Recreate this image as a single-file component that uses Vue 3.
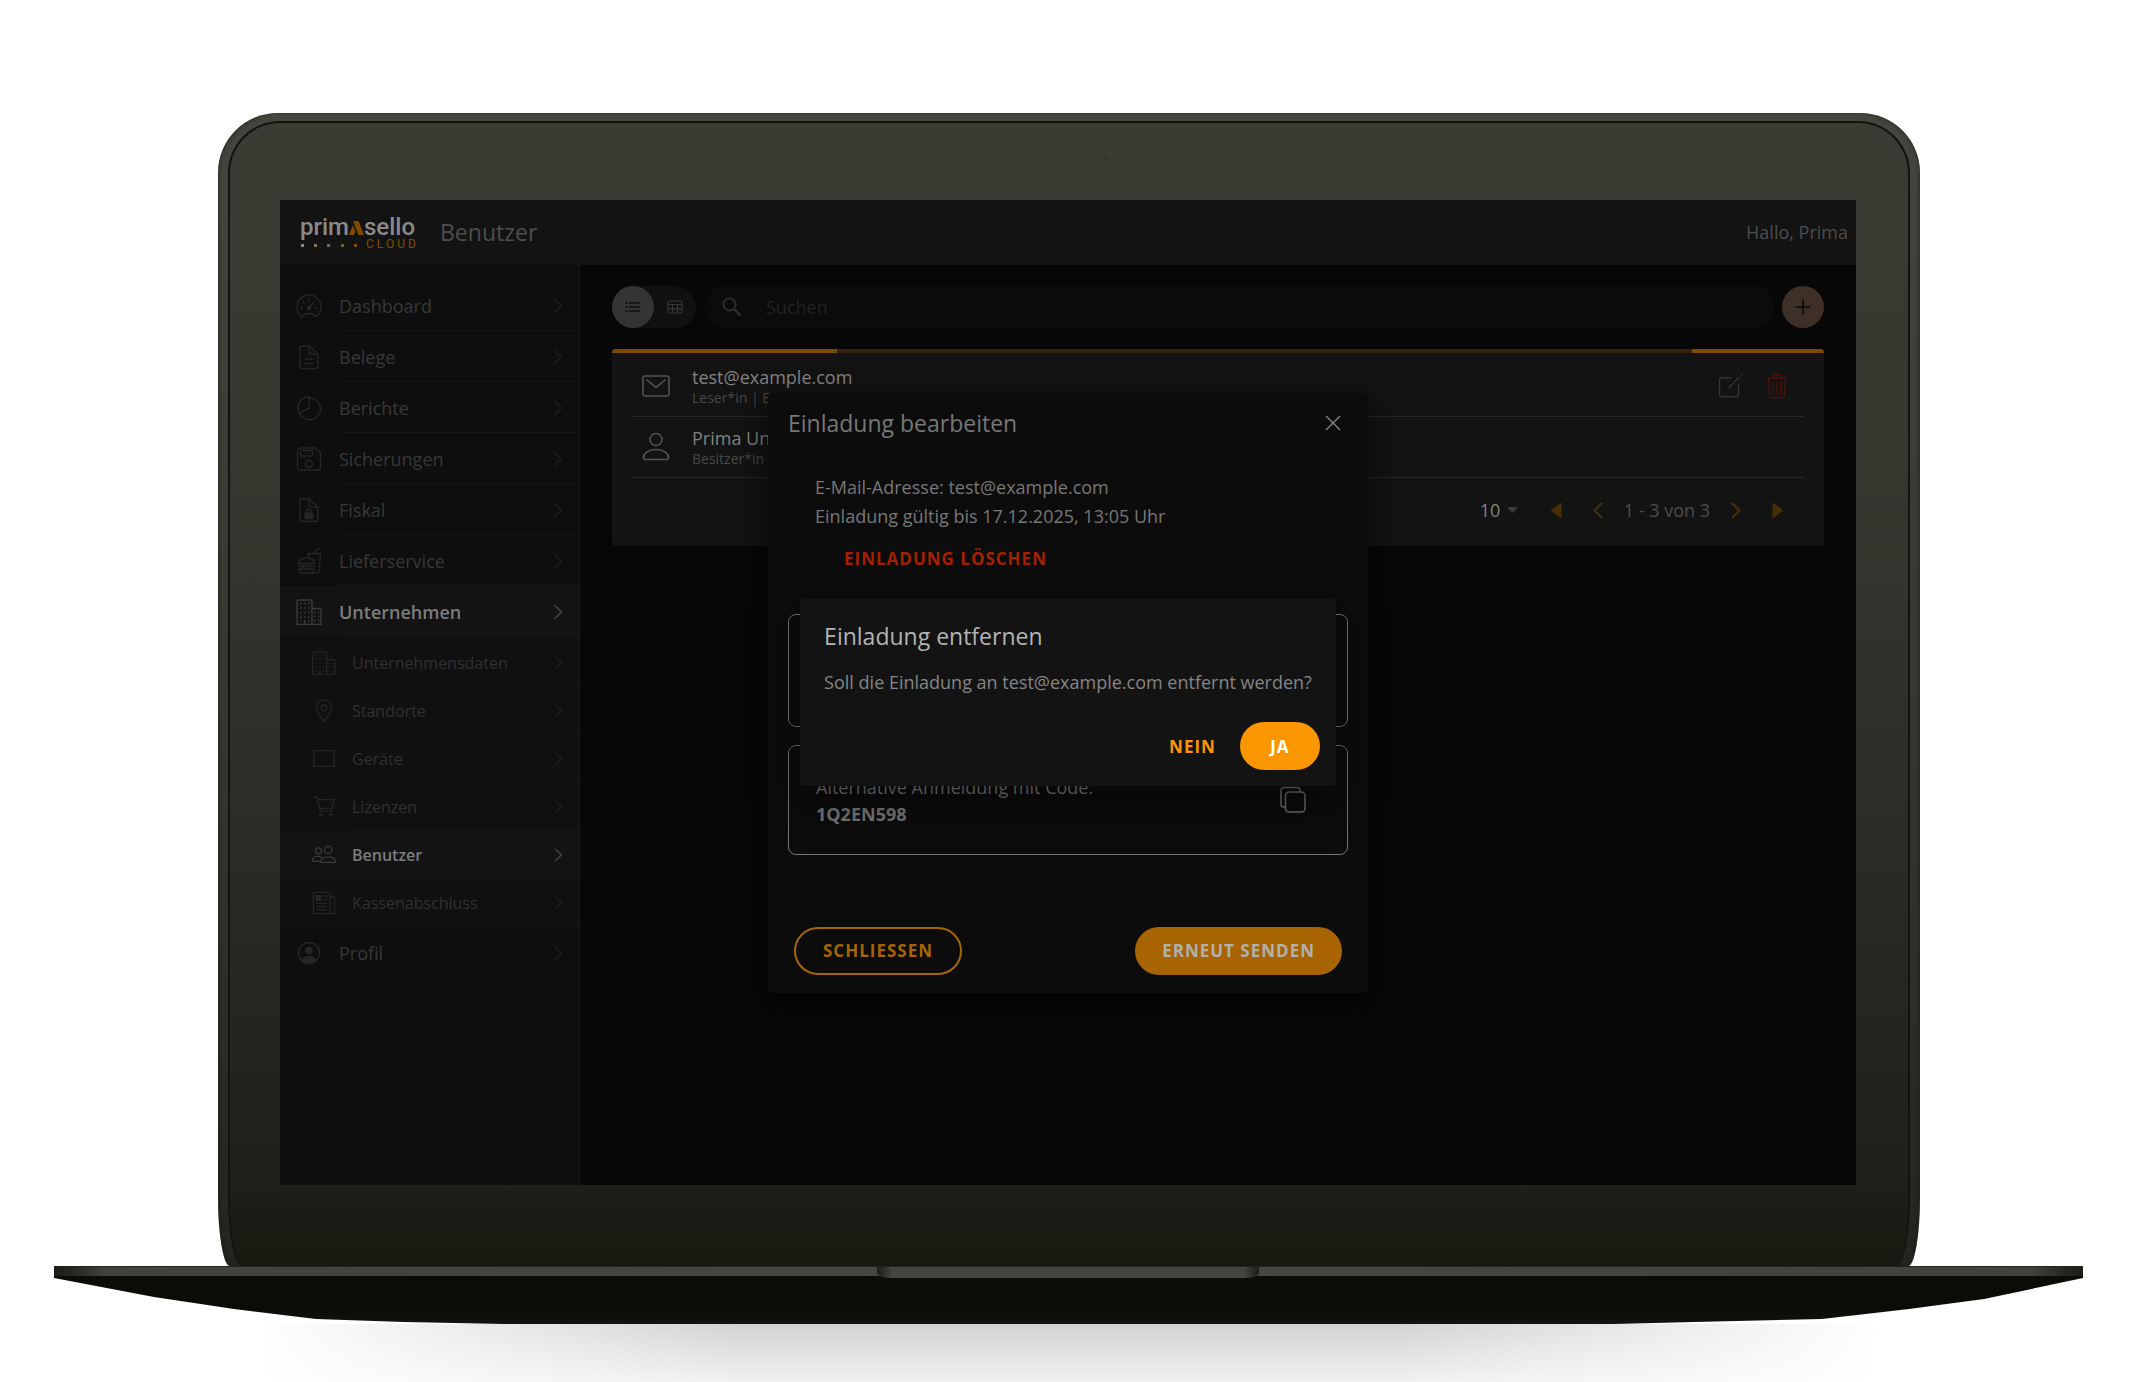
<template>
  <div class="page">
    <div class="lid">
      <div class="bezel">
        <span class="camera"></span>
        <div class="screen">

          <!-- Header -->
          <header class="topbar">
            <a href="#" class="logo" aria-label="primasello cloud">
              <span class="logo-word">
                <span>prim</span>
                <svg width="15" height="14" viewBox="0 0 15 14">
                  <path d="M4 0h5.500L15 14H9.500zM3.900 4.200L6.400 10.600 4.800 14H0z" fill="#844b00"/>
                </svg>
                <span>sello</span>
              </span>
              <span class="logo-sub">
                <svg width="57" height="9" viewBox="0 0 57 9">
                  <path d="M1 5h3v3H1z" fill="#8a8a8a"/>
                  <path d="M14 5h3v3h-3z" fill="#857560"/>
                  <path d="M27 5h3v3h-3z" fill="#80663f"/>
                  <path d="M41 5h3v3h-3z" fill="#855a20"/>
                  <path d="M54 5h3v3h-3z" fill="#844b00"/>
                </svg>
                <span class="logo-cloud">CLOUD</span>
              </span>
            </a>
            <h1 class="page-title">Benutzer</h1>
            <span class="greeting">Hallo, Prima</span>
          </header>

          <div class="layout">
            <!-- Sidebar -->
            <nav class="sidebar" aria-label="Hauptmenü">
              <template v-for="item in menu" :key="item.label">
                <a href="#" class="nav-item" :class="{ active: item.active }">
                  <svg class="nav-icon" width="26" height="26" viewBox="0 0 26 26" v-html="icons[item.icon]"></svg>
                  <span class="nav-label">{{ item.label }}</span>
                  <svg class="nav-chevron" width="10" height="16" viewBox="0 0 10 16">
                    <path d="M1 1l7.500 7L1 15"/>
                  </svg>
                </a>
                <div v-if="item.children" class="subnav">
                  <a v-for="sub in item.children" :key="sub.label" href="#" class="nav-item sub" :class="{ active: sub.active }">
                    <svg class="nav-icon" width="24" height="24" viewBox="0 0 26 26" v-html="icons[sub.icon]"></svg>
                    <span class="nav-label">{{ sub.label }}</span>
                    <svg class="nav-chevron" width="9" height="14" viewBox="0 0 10 16">
                      <path d="M1 1l7.500 7L1 15"/>
                    </svg>
                  </a>
                </div>
              </template>
            </nav>

            <!-- Content -->
            <main class="content">
              <div class="toolbar">
                <div class="view-toggle">
                  <button class="toggle-btn selected" aria-label="Liste">
                    <svg width="16" height="12" viewBox="0 0 16 12">
                      <path d="M4 2h11M4 6h11M4 10h11" stroke="#101010" stroke-width="1.400"/>
                      <path d="M.5 1h2v2h-2zM.5 5h2v2h-2zM.5 9h2v2h-2z" fill="#101010"/>
                    </svg>
                  </button>
                  <button class="toggle-btn" aria-label="Tabelle">
                    <svg width="16" height="14" viewBox="0 0 16 14" fill="none" stroke="#373737" stroke-width="1.200">
                      <rect x="1" y="1" width="14" height="12" rx="1.500"/>
                      <path d="M1 4.500h14M1 8.800h14M5.500 4.500V13M10.500 4.500V13"/>
                    </svg>
                  </button>
                </div>
                <label class="search">
                  <svg width="20" height="20" viewBox="0 0 20 20" fill="none" stroke="#2b2b2b">
                    <circle cx="7.500" cy="7.500" r="6" stroke-width="2.200"/>
                    <path d="M12 12l6.500 6.500" stroke-width="2.800"/>
                  </svg>
                  <input v-model="search" type="text" placeholder="Suchen" aria-label="Suchen" />
                </label>
                <button class="add-btn" aria-label="Hinzufügen">
                  <svg width="16" height="16" viewBox="0 0 16 16">
                    <path d="M8 .5v15M.5 8h15" stroke="#0b0805" stroke-width="1.600"/>
                  </svg>
                </button>
              </div>

              <section class="card">
                <div class="progress"><span class="progress-start"></span><span class="progress-end"></span></div>
                <ul class="user-list">
                  <li v-for="user in users" :key="user.name" class="user-row">
                    <svg class="user-icon" width="30" height="30" viewBox="0 0 30 30" v-html="icons[user.icon]"></svg>
                    <div class="user-text">
                      <span class="user-name">{{ user.name }}</span>
                      <span class="user-role">{{ user.role }}</span>
                    </div>
                    <template v-if="user.editable">
                      <button class="row-btn" aria-label="Bearbeiten">
                        <svg width="26" height="26" viewBox="0 0 26 26" fill="none" stroke="#343434" stroke-width="1.400">
                          <path d="M14.500 4.700H5a2.500 2.500 0 0 0-2.500 2.500v14A2.500 2.500 0 0 0 5 23.700h14a2.500 2.500 0 0 0 2.500-2.500V10.500"/>
                          <path d="M11.500 15l11-11M24 2.600l1.200-1.200"/>
                        </svg>
                      </button>
                      <button class="row-btn" aria-label="Löschen">
                        <svg width="26" height="26" viewBox="0 0 26 26" fill="none" stroke="#4d1208" stroke-width="1.400">
                          <path d="M2.500 5h21M4.500 5.500l1.200 17.500a2 2 0 0 0 2 1.800h10.600a2 2 0 0 0 2-1.800L21.500 5.500M9 4.500V3a1.500 1.500 0 0 1 1.500-1.500h5A1.500 1.500 0 0 1 17 3v1.500M9 8.500l.400 13M13 8.500v13M17 8.500l-.400 13"/>
                        </svg>
                      </button>
                    </template>
                  </li>
                </ul>
                <footer class="pager">
                  <span class="page-size">
                    <select v-model="pageSize" aria-label="Einträge pro Seite">
                      <option value="10">10</option>
                      <option value="25">25</option>
                    </select>
                    <svg width="11" height="6" viewBox="0 0 11 6"><path d="M0 0h11L5.500 6z" fill="#3a3a3a"/></svg>
                  </span>
                  <button class="pager-btn" aria-label="Erste Seite">
                    <svg width="12" height="17" viewBox="0 0 12 17"><path d="M11.500.5v16L.5 8.500z" fill="#4a2e08"/></svg>
                  </button>
                  <button class="pager-btn" aria-label="Vorherige Seite">
                    <svg width="10" height="17" viewBox="0 0 10 17"><path d="M9 1L1.500 8.500 9 16" fill="none" stroke="#4a2e08" stroke-width="2"/></svg>
                  </button>
                  <span class="pager-info">1 - 3 von 3</span>
                  <button class="pager-btn" aria-label="Nächste Seite">
                    <svg width="10" height="17" viewBox="0 0 10 17"><path d="M1 1l7.500 7.500L1 16" fill="none" stroke="#4a2e08" stroke-width="2"/></svg>
                  </button>
                  <button class="pager-btn" aria-label="Letzte Seite">
                    <svg width="12" height="17" viewBox="0 0 12 17"><path d="M.5.5v16l11-8z" fill="#4a2e08"/></svg>
                  </button>
                </footer>
              </section>
            </main>
          </div>

          <!-- Einladung bearbeiten -->
          <div class="overlay">
            <div class="modal" role="dialog" aria-labelledby="edit-title">
              <div class="modal-header">
                <h2 id="edit-title">Einladung bearbeiten</h2>
                <button class="modal-close" aria-label="Dialog schließen">
                  <svg width="16" height="16" viewBox="0 0 16 16">
                    <path d="M1 1l14 14M15 1L1 15" stroke="#858585" stroke-width="1.400"/>
                  </svg>
                </button>
              </div>
              <div class="modal-info">
                <p>E-Mail-Adresse: test@example.com</p>
                <p>Einladung gültig bis 17.12.2025, 13:05 Uhr</p>
              </div>
              <button class="btn btn-delete">EINLADUNG LÖSCHEN</button>
              <div class="box box-link"></div>
              <div class="box">
                <div class="box-text">
                  <p>Alternative Anmeldung mit Code:</p>
                  <p class="code">1Q2EN598</p>
                </div>
                <button class="copy-btn" aria-label="Code kopieren">
                  <svg width="26" height="30" viewBox="0 0 26 30" fill="none" stroke="#6c6c6c" stroke-width="1.500">
                    <rect x="5.500" y="7" width="19.500" height="20" rx="3.500"/>
                    <path d="M5.500 22H4a3 3 0 0 1-3-3V5.500a3 3 0 0 1 3-3h13a3 3 0 0 1 3 3V7"/>
                  </svg>
                </button>
              </div>
              <div class="modal-footer">
                <button class="btn btn-outline">SCHLIESSEN</button>
                <button class="btn btn-dim">ERNEUT SENDEN</button>
              </div>
            </div>
          </div>

          <!-- Einladung entfernen -->
          <div class="overlay">
            <div class="confirm" role="alertdialog" aria-labelledby="confirm-title">
              <h2 id="confirm-title">Einladung entfernen</h2>
              <p>Soll die Einladung an test@example.com entfernt werden?</p>
              <div class="confirm-actions">
                <button class="btn btn-text">NEIN</button>
                <button class="btn btn-primary">JA</button>
              </div>
            </div>
          </div>

        </div>
      </div>
    </div>

    <!-- Laptop base -->
    <svg class="base" viewBox="0 0 2029 58" preserveAspectRatio="none">
      <defs>
        <linearGradient id="under" x1="0" y1="0" x2="0" y2="1">
          <stop offset="0" stop-color="#0b0c06"/>
          <stop offset="0.700" stop-color="#0c0c07"/>
          <stop offset="1" stop-color="#131112"/>
        </linearGradient>
        <linearGradient id="edge" x1="0" y1="0" x2="1" y2="0">
          <stop offset="0" stop-color="#1c1c17"/>
          <stop offset="0.008" stop-color="#25251f"/>
          <stop offset="0.025" stop-color="#42413b"/>
          <stop offset="0.500" stop-color="#484740"/>
          <stop offset="0.975" stop-color="#42413b"/>
          <stop offset="0.992" stop-color="#25251f"/>
          <stop offset="1" stop-color="#1c1c17"/>
        </linearGradient>
        <linearGradient id="notch" x1="0" y1="0" x2="1" y2="0">
          <stop offset="0" stop-color="#1c1c17"/>
          <stop offset="0.040" stop-color="#45443e"/>
          <stop offset="0.960" stop-color="#45443e"/>
          <stop offset="1" stop-color="#1c1c17"/>
        </linearGradient>
      </defs>
      <path d="M0 9H2029V12L1930 33 1855 43 1768 53 1640 56 1560 58H450L350 56 262 53 180 43 100 31 0 12z" fill="url(#under)"/>
      <rect width="2029" height="10" fill="url(#edge)"/>
      <path d="M0 .5h2029" stroke="#24241e"/>
      <path d="M823 1h382v6q-2 5-14 5H837q-12 0-14-5z" fill="url(#notch)"/>
    </svg>
    <div class="ground"></div>
  </div>
</template>

<script setup>
import { ref } from 'vue'

const search = ref('')
const pageSize = ref('10')

const menu = [
  { label: 'Dashboard', icon: 'gauge' },
  { label: 'Belege', icon: 'document' },
  { label: 'Berichte', icon: 'pie' },
  { label: 'Sicherungen', icon: 'disk' },
  { label: 'Fiskal', icon: 'lockedDocument' },
  { label: 'Lieferservice', icon: 'food' },
  {
    label: 'Unternehmen',
    icon: 'building',
    active: true,
    children: [
      { label: 'Unternehmensdaten', icon: 'building' },
      { label: 'Standorte', icon: 'pin' },
      { label: 'Geräte', icon: 'laptop' },
      { label: 'Lizenzen', icon: 'cart' },
      { label: 'Benutzer', icon: 'people', active: true },
      { label: 'Kassenabschluss', icon: 'news' },
    ],
  },
  { label: 'Profil', icon: 'profile' },
]

const users = [
  { name: 'test@example.com', role: 'Leser*in | E', icon: 'mail', editable: true },
  { name: 'Prima Un', role: 'Besitzer*in', icon: 'person' },
]

const icons = {
  gauge: '<path d="M5.500 23.500C2.500 21.500 1 18 1 14a12 12 0 0 1 24 0c0 4-1.500 7.500-4.500 9.500-1.500-.3-2.500-3-7.500-3s-6 2.700-7.500 3z"/><path d="M12.500 15.500l6-6.500M13 5.500v3M6.500 8.500L8 10M4 14.500h3M19 14.500h3"/><circle cx="13" cy="15" r="1.500" fill="currentColor"/>',
  document: '<path d="M6.500 2H13l9 8v12a2.500 2.500 0 0 1-2.500 2.500h-13A2.500 2.500 0 0 1 4 22V4.500A2.500 2.500 0 0 1 6.500 2zM13 2v6a2 2 0 0 0 2 2h7M8.500 15h9M8.500 19.500h9"/>',
  pie: '<path d="M13.500 2.800A11 11 0 1 1 3.500 18.500M13 1.500V13.500L2.500 18A12 12 0 0 1 13 1.500z"/>',
  disk: '<path d="M3.500 2H19l5.500 5v14.500a2.500 2.500 0 0 1-2.500 2.500H4a2.500 2.500 0 0 1-2.500-2.500V4a2 2 0 0 1 2-2z"/><rect x="4.500" y="4.500" width="12" height="5.500" rx="1"/><circle cx="13" cy="18" r="3.500"/>',
  lockedDocument: '<path d="M6.500 2H13l9 8v12a2.500 2.500 0 0 1-2.500 2.500h-13A2.500 2.500 0 0 1 4 22V4.500A2.500 2.500 0 0 1 6.500 2zM13 2v6a2 2 0 0 0 2 2h7M10.700 16v-1.500a2.300 2.300 0 0 1 4.600 0V16"/><rect x="9" y="16" width="8" height="5.500" rx="1" fill="currentColor"/>',
  food: '<path d="M2.500 15.500c0-4 4-5.500 8-5.500s8 1.500 8 5.500zM1.500 18h18M3 21c0 3 1.500 4 3.500 4h8c2 0 3.500-1 3.500-4zM5 18l2 1.500L9.500 18M11 5.500h14.500M12.500 5.500l.3 4M24.500 5.500L23 23q-.2 2-2 2h-5M19 5.500l1-3.500 3.500-1"/>',
  building: '<path d="M1 25.500V2.500A1.500 1.500 0 0 1 2.500 1h12A1.500 1.500 0 0 1 16 2.500v23zM16 9.500h7.500a1.500 1.500 0 0 1 1.500 1.500v14.500h-9M8.500 25v-3.500"/><path d="M4 4.500h10M4 9h10M4 13.500h10M4 18h10M4 22h10M18 13.500h6M18 17.500h6M18 21.500h6" stroke-dasharray="1.500 2.500"/>',
  pin: '<path d="M13 24.500C9 18.500 4.500 13.500 4.500 9.500a8.500 8.500 0 0 1 17 0c0 4-4.500 9-8.500 15z"/><circle cx="13" cy="9.500" r="3"/>',
  laptop: '<path d="M2 20V5.500A1.500 1.500 0 0 1 3.500 4h19A1.500 1.500 0 0 1 24 5.500V20M0 21h26"/>',
  cart: '<path d="M1.500 2.500h4L9 17.500h14M6.500 5H24l-2 9.500H8.500"/><circle cx="9.500" cy="21.500" r="1.300"/><circle cx="20.500" cy="21.500" r="1.300"/>',
  people: '<circle cx="7" cy="8.500" r="3.200"/><circle cx="17.500" cy="7.500" r="4"/><path d="M9.500 21c0-4 3.500-6 8-6s8 2 8 6zM9 20H.5c0-3.500 2.500-5.500 6-5.500 1.800 0 3.200.5 4 1.500"/>',
  news: '<path d="M3 1.500h15A1.500 1.500 0 0 1 19.500 3v21.500H3A1.500 1.500 0 0 1 1.500 23V3A1.500 1.500 0 0 1 3 1.500zM19.500 6H23a1.500 1.500 0 0 1 1.500 1.500V23a1.500 1.500 0 0 1-1.500 1.500h-3.500M12 5.500h5M12 9.500h5M4.500 13.500h12M4.500 17h12M4.500 20.500h12"/><path d="M4.500 5h5v5h-5z" fill="currentColor"/>',
  profile: '<circle cx="13" cy="13" r="10.500"/><circle cx="13" cy="10.500" r="3.800" fill="currentColor" stroke="none"/><path d="M5.500 20c1-2.500 3.500-4 7.500-4s6.500 1.500 7.500 4c-4 4.500-11 4.500-15 0z" fill="currentColor" stroke="none"/>',
  mail: '<rect x="2" y="5" width="26" height="20" rx="2"/><path d="M5.500 8.500L15 16.500l9.500-8"/>',
  person: '<circle cx="15" cy="7.500" r="6"/><path d="M2.500 26c0-5 5-8.500 12.500-8.500S27.500 21 27.500 26c0 1-.5 1.500-1.500 1.500H4c-1 0-1.500-.5-1.500-1.500z"/>',
}
</script>

<style>
body {
  margin: 0;
  background: #ffffff;
}
</style>

<style scoped>
.page {
  min-height: 100vh;
  box-sizing: border-box;
  padding: 113px 60px 0 54px;
  display: flex;
  flex-direction: column;
  font-family: 'Open Sans', 'Noto Sans', sans-serif;
  font-size: 18px;
  overflow: hidden;
}
button {
  font-family: inherit;
  border: none;
  background: none;
  padding: 0;
  cursor: pointer;
  display: flex;
  align-items: center;
  justify-content: center;
}
h1, h2, p, ul {
  margin: 0;
  padding: 0;
}

/* Laptop */
.lid {
  margin: 0 163px 0 164px;
  padding: 8px 10px 0;
  border-radius: 60px 60px 12px 12px / 60px 60px 70px 70px;
  background: linear-gradient(#55544c, #45443d 6px, #34332d 60%, #24241e);
  box-shadow: inset 0 0 4px #1c1c17;
}
.bezel {
  position: relative;
  padding: 77px 52px 81px 50px;
  border: 2px solid #12120e;
  border-bottom: none;
  border-radius: 52px 52px 14px 14px / 52px 52px 70px 70px;
  background: linear-gradient(#3b3a33, #37362f 30%, #2b2a24 65%, #201f1a 92%, #181810);
}
.camera {
  position: absolute;
  top: 32px;
  left: 52%;
  width: 6px;
  height: 6px;
  border-radius: 50%;
  background: #36352e;
}
.screen {
  position: relative;
  aspect-ratio: 16 / 10;
  display: flex;
  flex-direction: column;
  background: #070707;
}
.base {
  width: 100%;
  height: 58px;
  flex: none;
  display: block;
}
.ground {
  flex: 1;
  min-height: 58px;
  background:
    linear-gradient(to right, #ffffff 10%, rgba(255, 255, 255, 0) 34%, rgba(255, 255, 255, 0) 66%, #ffffff 90%),
    linear-gradient(#d2d2d2, #f1f1f0);
}

/* Header */
.topbar {
  height: 65px;
  flex: none;
  box-sizing: border-box;
  padding: 0 8px 2px 20px;
  display: flex;
  align-items: center;
  background: #131313;
}
.logo {
  display: flex;
  flex-direction: column;
  width: 116px;
  text-decoration: none;
}
.logo-word {
  display: flex;
  align-items: baseline;
  font-family: Roboto, sans-serif;
  font-weight: 500;
  font-size: 24px;
  line-height: 24px;
  color: #8a8a8a;
}
.logo-sub {
  display: flex;
  align-items: center;
  gap: 9px;
  height: 10px;
}
.logo-sub svg {
  flex: none;
}
.logo-cloud {
  font-family: Roboto, sans-serif;
  font-size: 12px;
  line-height: 10px;
  letter-spacing: 3px;
  color: #844b00;
}
.page-title {
  margin-left: 24px;
  font-weight: 500;
  font-size: 23px;
  line-height: 32px;
  color: #4d4d4d;
}
.greeting {
  margin-left: auto;
  color: #4d4d4d;
}

.layout {
  flex: 1;
  display: flex;
}

/* Sidebar */
.sidebar {
  width: 300px;
  flex: none;
  box-sizing: border-box;
  padding-top: 15px;
  border-right: 1px solid #1a1a1a;
  background: #0e0e0e;
}
.nav-item {
  height: 51px;
  padding-left: 16px;
  display: flex;
  align-items: center;
  gap: 17px;
  position: relative;
  color: #383838;
  text-decoration: none;
}
.nav-item::after {
  content: '';
  position: absolute;
  left: 59px;
  right: 0;
  bottom: 0;
  height: 1px;
  background: #161616;
}
.nav-item:last-child::after {
  display: none;
}
.nav-label {
  flex: 1;
}
.nav-icon {
  color: #262626;
  fill: none;
  stroke: currentColor;
  stroke-width: 1.4;
}
.nav-chevron {
  margin-right: 16px;
  fill: none;
  stroke: #1d1d1d;
  stroke-width: 1.6;
}
.subnav {
  padding: 2px 0 0;
  background: #101010;
}
.nav-item.sub {
  height: 48px;
  padding-left: 32px;
  gap: 16px;
  font-size: 16px;
  color: #303030;
}
.nav-item.sub::after {
  display: block;
  left: 72px;
}
.nav-item.active {
  background: #131313;
  font-weight: 600;
  color: #7d7d7d;
}
.nav-item.active .nav-icon {
  color: #3a3a3a;
}
.nav-item.active .nav-chevron {
  stroke: #444444;
}

/* Content */
.content {
  flex: 1;
  padding: 20px 32px;
}
.toolbar {
  display: flex;
  align-items: center;
  gap: 8px;
  margin-bottom: 20px;
}
.view-toggle {
  display: flex;
  border-radius: 21px;
  background: #101010;
}
.toggle-btn {
  width: 42px;
  height: 42px;
  border-radius: 50%;
}
.toggle-btn.selected {
  background: #343434;
}
.search {
  flex: 1;
  height: 44px;
  box-sizing: border-box;
  padding: 0 18px;
  display: flex;
  align-items: center;
  gap: 24px;
  border-radius: 22px;
  background: #0b0b0b;
}
.search input {
  flex: 1;
  padding: 0;
  border: none;
  outline: none;
  background: none;
  font-family: inherit;
  font-size: 18px;
  color: #4d4d4d;
}
.search input::placeholder {
  color: #232323;
  opacity: 1;
}
.add-btn {
  width: 42px;
  height: 42px;
  border-radius: 50%;
  background: #3e3026;
}

/* Card */
.card {
  border-radius: 4px;
  overflow: hidden;
  background: #131313;
}
.progress {
  height: 4px;
  display: flex;
  justify-content: space-between;
  background: #33230e;
}
.progress-start,
.progress-end {
  width: 18.6%;
  background: #7d4900;
}
.progress-end {
  width: 10.9%;
}
.user-list {
  list-style: none;
  padding: 3px 20px 0;
}
.user-row {
  height: 60px;
  padding: 0 14px 0 9px;
  display: flex;
  align-items: center;
  border-bottom: 1px solid #272727;
}
.user-icon {
  fill: none;
  stroke: #545454;
  stroke-width: 1.6;
}
.user-text {
  flex: 1;
  margin-left: 21px;
  display: flex;
  flex-direction: column;
}
.user-name {
  line-height: 24px;
  color: #828282;
}
.user-role {
  font-size: 14px;
  line-height: 18px;
  color: #484848;
}
.row-btn {
  width: 26px;
  height: 26px;
  margin-left: 21px;
}
.pager {
  height: 64px;
  padding: 0 25px 4px;
  display: flex;
  align-items: center;
  justify-content: flex-end;
}
.page-size {
  display: flex;
  align-items: center;
  gap: 6px;
  margin-right: 17px;
}
.page-size select {
  appearance: none;
  padding: 0;
  border: none;
  background: none;
  font-family: inherit;
  font-size: 18px;
  color: #828282;
}
.pager-btn {
  width: 42px;
  height: 42px;
}
.pager-info {
  padding: 0 5px;
  color: #4d4d4d;
}

/* Dialogs */
.overlay {
  position: absolute;
  inset: 0;
  display: flex;
  align-items: center;
  justify-content: center;
}
.modal {
  width: 600px;
  min-height: 600px;
  box-sizing: border-box;
  padding: 0 20px 18px;
  display: flex;
  flex-direction: column;
  border-radius: 4px;
  background: #0c0c0c;
  box-shadow: 0 12px 30px 4px rgba(0, 0, 0, 0.5);
  color: #777777;
}
.modal-header {
  height: 60px;
  display: flex;
  align-items: center;
  justify-content: space-between;
}
h2 {
  font-weight: 500;
  font-size: 23px;
  line-height: 34px;
}
.modal-close {
  width: 30px;
  height: 30px;
}
.modal-info {
  padding: 20px 27px 0;
  line-height: 29px;
}
.btn {
  height: 48px;
  padding: 0 27px;
  border-radius: 24px;
  font-weight: 700;
  font-size: 17px;
  letter-spacing: 1px;
}
.btn-delete {
  align-self: flex-start;
  margin: 4px 0 31px 29px;
  color: #a62000;
}
.box {
  box-sizing: border-box;
  height: 110px;
  padding: 0 41px 0 27px;
  display: flex;
  align-items: center;
  justify-content: space-between;
  border: 1px solid #777777;
  border-radius: 8px;
}
.box-link {
  height: 113px;
  margin-bottom: 18px;
}
.box-text {
  padding-top: 3px;
  line-height: 27px;
}
.code {
  font-weight: 700;
}
.modal-footer {
  margin-top: auto;
  padding: 0 6px;
  display: flex;
  justify-content: space-between;
}
.btn-outline {
  border: 2px solid #a86400;
  color: #a86400;
}
.btn-dim {
  background: #a86400;
  color: #b0b0b0;
}
.confirm {
  padding: 20px 16px 16px 24px;
  border-radius: 4px;
  background: #131313;
  box-shadow: 0 12px 40px 8px rgba(0, 0, 0, 0.4);
  color: #858585;
}
.confirm h2 {
  color: #b4b4b4;
}
.confirm p {
  margin: 15px 8px 26px 0;
  line-height: 28px;
}
.confirm-actions {
  display: flex;
  justify-content: flex-end;
}
.btn-text {
  padding: 0 24px;
  color: #fa9600;
}
.btn-primary {
  min-width: 80px;
  background: #fa9600;
  color: #ffffff;
}
</style>
